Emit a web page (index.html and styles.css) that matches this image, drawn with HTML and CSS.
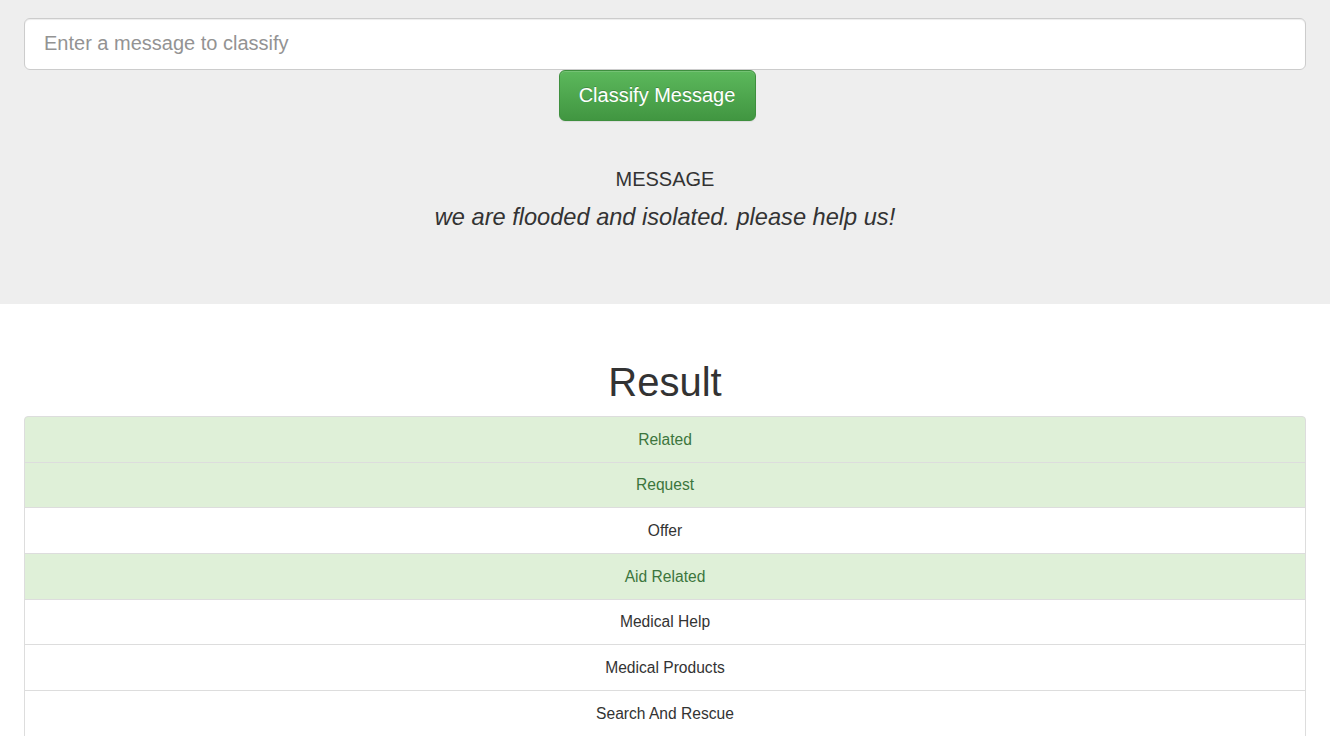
FILE: index.html
```html
<!DOCTYPE html>
<html lang="en">
<head>
<meta charset="utf-8">
<title>Disaster Response</title>
<link rel="stylesheet" href="styles.css">
</head>
<body>
<div class="jumbotron">
  <div class="container">
    <form class="classify-form">
      <input class="message-input" type="text" placeholder="Enter a message to classify">
      <div class="btn-row">
        <button type="button" class="btn-success">Classify Message</button>
      </div>
    </form>
    <div class="message-block">
      <h4 class="message-label">MESSAGE</h4>
      <p class="message-text">we are flooded and isolated. please help us!</p>
    </div>
  </div>
</div>
<div class="container results">
  <h1 class="result-title">Result</h1>
  <ul class="list-group">
    <li class="list-item success">Related</li>
    <li class="list-item success">Request</li>
    <li class="list-item">Offer</li>
    <li class="list-item success">Aid Related</li>
    <li class="list-item">Medical Help</li>
    <li class="list-item">Medical Products</li>
    <li class="list-item">Search And Rescue</li>
    <li class="list-item">Security</li>
    <li class="list-item">Military</li>
  </ul>
</div>
</body>
</html>
```
FILE: styles.css
```css
* { box-sizing: border-box; }
html, body { margin: 0; padding: 0; }
body {
  font-family: "Liberation Sans", Arial, sans-serif;
  color: #333;
  background: #fff;
}
.container {
  padding: 0 24px;
}
.jumbotron {
  background: #eee;
  padding-top: 18px;
  height: 304px;
}
.classify-form {
  display: flex;
  flex-direction: column;
}
.message-input {
  width: 100%;
  height: 52px;
  border: 1px solid #ccc;
  border-radius: 6px;
  background: #fff;
  font-family: inherit;
  font-size: 20px;
  padding: 0 19px 2px;
  color: #555;
  box-shadow: inset 0 1px 1px rgba(0,0,0,.075);
}
.message-input::placeholder { color: #939393; }
.btn-row {
  display: flex;
  justify-content: center;
  padding-right: 16px;
}
.btn-success {
  width: 197px;
  height: 51px;
  font-family: inherit;
  font-size: 20px;
  color: #fff;
  border: 1px solid #3e8f3e;
  border-radius: 6px;
  background: linear-gradient(to bottom, #5cb85c 0%, #419641 100%);
  text-shadow: 0 -1px 0 rgba(0,0,0,.2);
  box-shadow: inset 0 1px 0 rgba(255,255,255,.15), 0 1px 1px rgba(0,0,0,.075);
  padding: 0;
  cursor: pointer;
}
.message-block {
  text-align: center;
  margin-top: 46px;
}
.message-label {
  margin: 0;
  font-size: 20px;
  font-weight: normal;
  line-height: 24px;
}
.message-text {
  margin: 12px 0 0;
  font-size: 23.6px;
  font-style: italic;
  line-height: 28px;
}
.result-title {
  text-align: center;
  font-size: 40px;
  font-weight: 500;
  line-height: 44px;
  margin: 56px 0 12px;
}
.list-group {
  list-style: none;
  margin: 0;
  padding: 0;
}
.list-item {
  text-align: center;
  font-size: 15.6px;
  line-height: 22.67px;
  padding: 11.5px 16px 10.5px;
  border: 1px solid #ddd;
  margin-bottom: -1px;
  background: #fff;
}
.list-item:first-child {
  border-top-left-radius: 4px;
  border-top-right-radius: 4px;
}
.list-item.success {
  background: #dff0d8;
  color: #3c763d;
}
```
